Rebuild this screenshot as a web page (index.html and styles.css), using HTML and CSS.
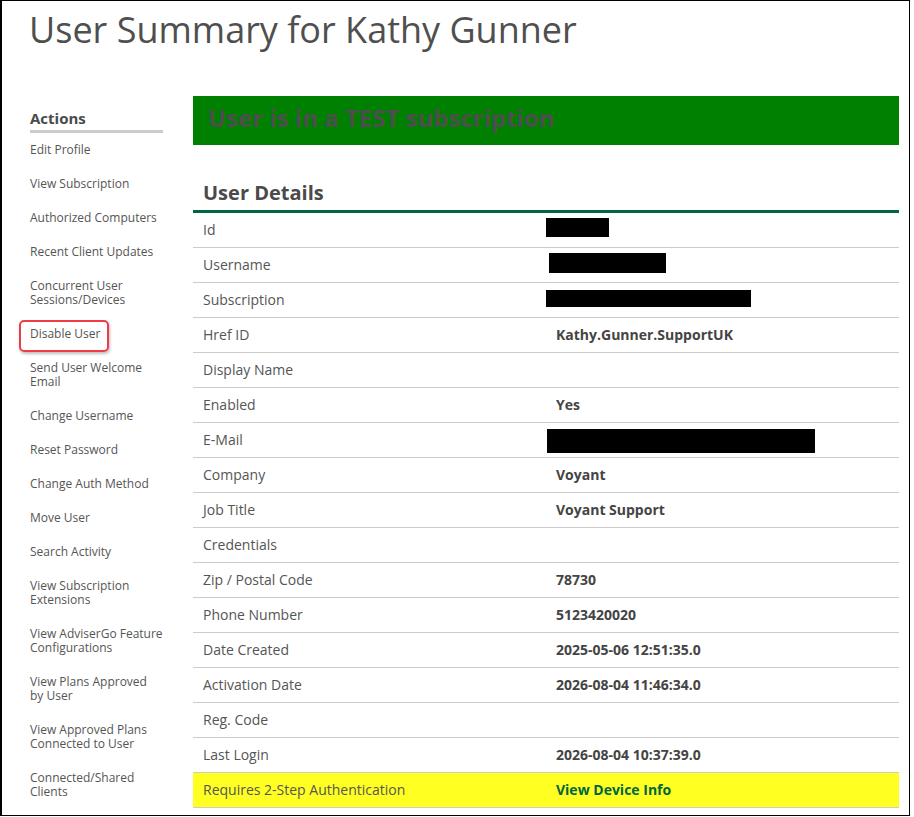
FILE: index.html
```html
<!DOCTYPE html>
<html>
<head>
<meta charset="utf-8">
<title>User Summary</title>
<link rel="stylesheet" href="styles.css">
</head>
<body>
<div class="frame">
  <h1 class="title">User Summary for Kathy Gunner</h1>
  <div class="columns">
    <aside class="sidebar">
      <h3 class="side-head">Actions</h3>
      <ul class="actions">
        <li>Edit Profile</li>
        <li>View Subscription</li>
        <li>Authorized Computers</li>
        <li>Recent Client Updates</li>
        <li>Concurrent User<br>Sessions/Devices</li>
        <li class="highlight">Disable User<span class="ring"></span></li>
        <li>Send User Welcome<br>Email</li>
        <li>Change Username</li>
        <li>Reset Password</li>
        <li>Change Auth Method</li>
        <li>Move User</li>
        <li>Search Activity</li>
        <li>View Subscription<br>Extensions</li>
        <li>View AdviserGo Feature<br>Configurations</li>
        <li>View Plans Approved<br>by User</li>
        <li>View Approved Plans<br>Connected to User</li>
        <li>Connected/Shared<br>Clients</li>
      </ul>
    </aside>
    <main class="main">
      <div class="banner">User is in a TEST subscription</div>
      <h2 class="details-head">User Details</h2>
      <div class="details">
        <div class="row"><div class="lbl">Id</div><div class="val redacted"><span class="box r-id"></span></div></div>
        <div class="row"><div class="lbl">Username</div><div class="val redacted"><span class="box r-user"></span></div></div>
        <div class="row"><div class="lbl">Subscription</div><div class="val redacted"><span class="box r-sub"></span></div></div>
        <div class="row"><div class="lbl">Href ID</div><div class="val">Kathy.Gunner.SupportUK</div></div>
        <div class="row"><div class="lbl">Display Name</div><div class="val"></div></div>
        <div class="row"><div class="lbl">Enabled</div><div class="val">Yes</div></div>
        <div class="row"><div class="lbl">E-Mail</div><div class="val redacted"><span class="box r-mail"></span></div></div>
        <div class="row"><div class="lbl">Company</div><div class="val">Voyant</div></div>
        <div class="row"><div class="lbl">Job Title</div><div class="val">Voyant Support</div></div>
        <div class="row"><div class="lbl">Credentials</div><div class="val"></div></div>
        <div class="row"><div class="lbl">Zip / Postal Code</div><div class="val">78730</div></div>
        <div class="row"><div class="lbl">Phone Number</div><div class="val">5123420020</div></div>
        <div class="row"><div class="lbl">Date Created</div><div class="val">2025-05-06 12:51:35.0</div></div>
        <div class="row"><div class="lbl">Activation Date</div><div class="val">2026-08-04 11:46:34.0</div></div>
        <div class="row"><div class="lbl">Reg. Code</div><div class="val"></div></div>
        <div class="row"><div class="lbl">Last Login</div><div class="val">2026-08-04 10:37:39.0</div></div>
        <div class="row warn"><div class="lbl">Requires 2-Step Authentication</div><div class="val"><a class="link" href="#">View Device Info</a></div></div>
      </div>
    </main>
  </div>
</div>
</body>
</html>
```
FILE: styles.css
```css
html, body {
  margin: 0;
  padding: 0;
  background: #fff;
}
body {
  font-family: "Open Sans", "Liberation Sans", sans-serif;
  color: #555;
}
.frame {
  box-sizing: border-box;
  width: 910px;
  height: 816px;
  border: 1px solid #000;
  border-left-width: 2px;
  overflow: hidden;
}
.title {
  margin: 0;
  padding: 4px 0 0 27px;
  font-size: 36px;
  font-weight: 400;
  line-height: 49px;
  color: #4f4f4f;
}
.columns {
  display: flex;
  margin-top: 42px;
  padding-left: 28px;
  gap: 30px;
}
.sidebar {
  width: 133px;
  flex: none;
  padding-top: 12px;
}
.side-head {
  margin: 0 0 10px;
  font-size: 15px;
  font-weight: 700;
  line-height: 20px;
  padding-bottom: 2px;
  border-bottom: 3px solid #ccc;
  color: #4a4a4a;
}
.actions {
  list-style: none;
  margin: 0;
  padding: 0;
  font-size: 12px;
  line-height: 14px;
}
.actions li {
  margin-bottom: 20px;
  white-space: nowrap;
  color: #555;
}
.highlight {
  position: relative;
}
.ring {
  position: absolute;
  left: -11px;
  top: -7px;
  width: 90px;
  height: 32px;
  box-sizing: border-box;
  border: 2px solid #ef3b44;
  border-radius: 5px;
  box-shadow: 1px 2px 3px rgba(0, 0, 0, 0.25);
}
.main {
  width: 706px;
  flex: none;
}
.banner {
  box-sizing: border-box;
  height: 49px;
  background: #008000;
  padding: 6px 0 0 15px;
  font-size: 24px;
  font-weight: 700;
  line-height: 32px;
  color: #4e4e4e;
}
.details-head {
  margin: 34px 0 0;
  padding: 0 0 4px 10px;
  font-size: 20px;
  font-weight: 700;
  line-height: 27px;
  color: #4a4a4a;
  border-bottom: 3px solid #006640;
}
.row {
  display: grid;
  grid-template-columns: 1fr 1fr;
  align-items: center;
  box-sizing: border-box;
  height: 35px;
  padding-bottom: 2px;
  border-bottom: 1px solid #ccc;
  font-size: 14px;
}
.lbl {
  padding-left: 10px;
  color: #555;
}
.val {
  padding-left: 10px;
  font-weight: 700;
  color: #444;
}
.val.redacted {
  align-self: start;
  padding-left: 0;
}
.box {
  display: block;
  background: #000;
}
.r-id { width: 63px; height: 19px; margin-top: 5px; }
.r-user { width: 117px; height: 20px; margin: 5px 0 0 3px; }
.r-sub { width: 205px; height: 17px; margin-top: 7px; }
.r-mail { width: 268px; height: 24px; margin: 6px 0 0 1px; }
.warn {
  background: #ffff22;
}
.link {
  color: #00663d;
  text-decoration: none;
}
```
